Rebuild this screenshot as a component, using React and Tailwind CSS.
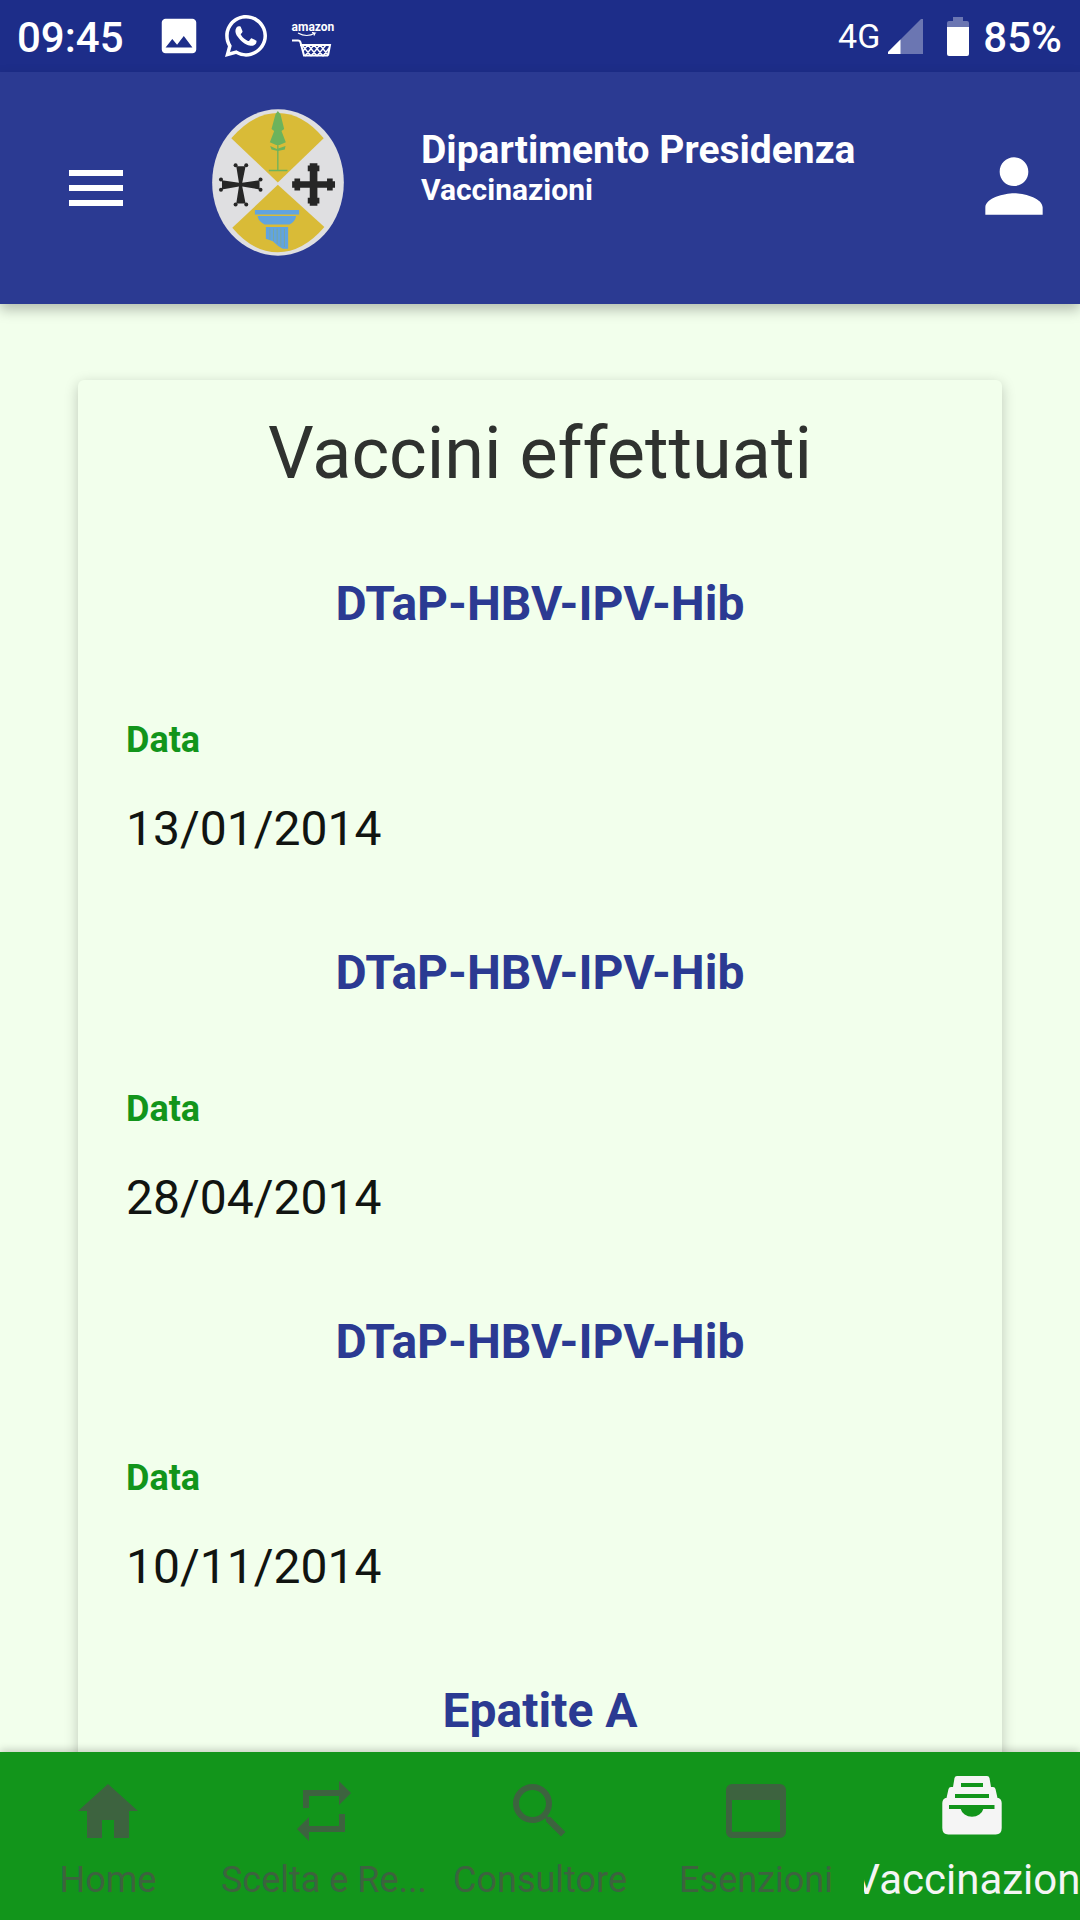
import React, { useState } from "react";
import { MdImage, MdMenu, MdPerson, MdRepeat, MdSearch } from "react-icons/md";
import { FaWhatsapp } from "react-icons/fa";

const vaccines = [
  { id: 1, name: "DTaP-HBV-IPV-Hib", date: "13/01/2014" },
  { id: 2, name: "DTaP-HBV-IPV-Hib", date: "28/04/2014" },
  { id: 3, name: "DTaP-HBV-IPV-Hib", date: "10/11/2014" },
  { id: 4, name: "Epatite A" },
];

const HomeIcon = () => (
  <svg viewBox="0 0 24 24" className="size-[72px]" fill="currentColor" aria-hidden="true">
    <path d="M10 21v-6h4v6h5v-9h3L12 3 2 12h3v9z" />
  </svg>
);

const WindowIcon = () => (
  <svg viewBox="0 0 24 24" className="size-[72px]" fill="currentColor" aria-hidden="true">
    <path
      fillRule="evenodd"
      d="M4 3h16a2 2 0 0 1 2 2v14a2 2 0 0 1-2 2H4a2 2 0 0 1-2-2V5a2 2 0 0 1 2-2zm0 5.3v10.6h16V8.3z"
    />
  </svg>
);

const DrawerIcon = () => (
  <svg viewBox="0 0 72 72" className="size-[72px]" fill="currentColor" aria-hidden="true">
    <path
      fillRule="evenodd"
      d="M21 7h30q2 0 2.5 2l1.5 9h2q2 0 2.5 2l2 9h1q3 1 3.2 5v25q0 6.5-6 6.5H12.3q-6 0-6-6.5V34q.2-4 3.2-5h1l2-9q.5-2 2.5-2h2l1.5-9Q19 7 21 7zm4 7v4h22v-4zm-6 11v4h34v-4zm-6 11v4h11.7a11.5 9.5 0 0 0 22.6 0H58.5v-4z"
    />
  </svg>
);

// Regione Calabria coat of arms
const Crest = () => (
  <svg viewBox="67 57 397 440" className="h-[147px] w-[132px] shrink-0" role="img" aria-label="Regione Calabria">
    <ellipse cx="265.5" cy="277" rx="198" ry="220" fill="#dfdfe1" />
    <path d="M265 277 125 144Q190 68 265 68T403 144z" fill="#d9bb37" />
    <path d="M265 284 128 413Q190 487 265 487T405 411z" fill="#d9bb37" />
    {/* pine */}
    <g fill="#6cb35c">
      <path d="M265 62 273 72 284 116 276 122 289 156 270 164H260L241 156 254 122 246 116 258 72z" />
      <path d="M242 167 262 176 288 167 286 178 265 182 246 178z" />
      <path d="M263 160h4v79h-4zM238 239h56v4h-56z" />
    </g>
    {/* column capital */}
    <g fill="#61a4e0">
      <path d="M196 360h133v13H196zM204 378h116q-3 18-20 25h-75q-18-8-21-25zM229 411h67v65h-16l-14-8-16-14-21-8z" />
    </g>
    <path d="M241 416v33M252 416v37M263 416v46M274 416v54M285 416v55" stroke="#83a982" strokeWidth="2" />
    {/* left cross */}
    <g fill="#262626">
      <path d="M148 278 140 228H168L158 278 210 270V298L158 289 168 340H140L148 289 97 298V270z" />
      <circle cx="138" cy="225" r="6" />
      <circle cx="170" cy="225" r="6" />
      <circle cx="138" cy="343" r="6" />
      <circle cx="170" cy="343" r="6" />
      <circle cx="94" cy="268" r="6" />
      <circle cx="94" cy="299" r="6" />
      <circle cx="213" cy="268" r="6" />
      <circle cx="213" cy="299" r="6" />
    </g>
    {/* right cross */}
    <path
      fill="#262626"
      d="M361 219h23v7h6v17h-6v30h29v-8h17v8h7v20h-7v8h-17v-8h-29v30h6v17h-6v7h-23v-7h-6v-17h6v-30h-29v8h-17v-8h-7v-20h7v-8h17v8h29v-30h-6v-17h6z"
    />
  </svg>
);

const CartIcon = () => (
  <svg viewBox="0 0 40 26" className="h-[26px] w-10" fill="none" stroke="white" aria-hidden="true">
    <path d="M6 1q9 5 17 0l-3-.5m3 .5-1 2.500" strokeWidth="1.2" />
    <path d="M0 8.500h6q2 0 2.5 2l3.500 13h24M8 13h30l-2 10.500" strokeWidth="2" />
    <path
      d="m10 13 9 11m-3-11 9 11m-3-11 9 11m-3-11 8 10M16 13l-5 6m11-6-9 11m15-11-9 11m15-11-9 11m12-8-6 8"
      strokeWidth="1.3"
    />
  </svg>
);

const StatusBar = () => (
  <div className="flex h-[72px] shrink-0 items-center justify-between bg-[#1d2d89] pr-[18px] pl-[17px] text-white">
    <div className="flex items-center">
      <span className="pt-1 text-[42px] leading-[56px] font-medium">09:45</span>
      <MdImage className="ml-8 size-[46px]" />
      <FaWhatsapp className="ml-5 size-12" />
      <div className="ml-[22px] flex flex-col pt-2">
        <span className="text-[12px] leading-[10px] font-bold">amazon</span>
        <CartIcon />
      </div>
    </div>
    <div className="flex items-center">
      <span className="text-[34px] leading-[56px]">4G</span>
      <svg viewBox="0 0 35 35" className="ml-2 size-[35px]" fill="white" aria-hidden="true">
        <path d="M0 35V33L33 0h2v35z" opacity=".35" />
        <path d="M0 35V33L12.5 20.5V35z" />
      </svg>
      <svg viewBox="0 0 22 39" className="ml-6 h-[39px] w-[22px]" fill="white" aria-hidden="true">
        <path d="M6 0h10v4h4q2 0 2 2v4H0V6q0-2 2-2h4z" opacity=".35" />
        <path d="M0 10h22v27q0 2-2 2H2q-2 0-2-2z" />
      </svg>
      <span className="ml-[14px] pt-1 text-[42px] leading-[56px] font-medium">85%</span>
    </div>
  </div>
);

const Header = () => (
  <header className="relative z-10 flex h-[232px] shrink-0 items-center bg-[#2b3a92] pr-[23px] pl-[60px] text-white shadow-[0_6px_12px_rgba(0,0,0,0.25)]">
    <button type="button" aria-label="Menu" className="shrink-0">
      <MdMenu className="size-[72px]" />
    </button>
    <div className="mb-3 ml-20">
      <Crest />
    </div>
    <div className="mb-10 ml-[77px] flex-1 font-bold">
      <h1 className="text-[39px] leading-[44px]">Dipartimento Presidenza</h1>
      <p className="text-[30px] leading-[36px]">Vaccinazioni</p>
    </div>
    <button type="button" aria-label="Profilo" className="mb-1 shrink-0">
      <MdPerson className="size-[86px]" />
    </button>
  </header>
);

const tabs = [
  { id: "home", label: "Home", icon: <HomeIcon /> },
  { id: "scelta", label: "Scelta e Re...", icon: <MdRepeat className="size-[72px]" /> },
  { id: "consultore", label: "Consultore", icon: <MdSearch className="size-[72px]" /> },
  { id: "esenzioni", label: "Esenzioni", icon: <WindowIcon /> },
  { id: "vaccinazioni", label: "Vaccinazioni", icon: <DrawerIcon /> },
];

const BottomNav = () => {
  const [active, setActive] = useState("vaccinazioni");

  return (
    <nav className="relative z-10 grid h-[168px] shrink-0 grid-cols-5 bg-[#12951b] shadow-[0_-2px_8px_rgba(0,0,0,0.2)]">
      {tabs.map((tab) => (
        <button
          key={tab.id}
          type="button"
          onClick={() => setActive(tab.id)}
          className={
            active === tab.id
              ? "flex min-w-0 flex-col items-center justify-between overflow-hidden pt-[17px] pb-4 text-[#f5f5f5]"
              : "flex min-w-0 flex-col items-center justify-between overflow-hidden pt-[23px] pb-4 text-[#3d633f]"
          }
        >
          {tab.icon}
          {active === tab.id ? (
            <span className="text-[42px] leading-[48px] whitespace-nowrap">{tab.label}</span>
          ) : (
            <span className="text-[36px] leading-[48px] whitespace-nowrap">{tab.label}</span>
          )}
        </button>
      ))}
    </nav>
  );
};

const App = () => {
  return (
    <div className="flex h-screen flex-col bg-[#f2ffec] font-[Roboto,sans-serif]">
      <StatusBar />
      <Header />
      <main className="min-h-0 flex-1 overflow-y-auto px-[78px] pt-[76px] [scrollbar-width:none]">
        <section className="rounded-md bg-[#f2ffec] px-12 pt-[26px] pb-20 shadow-[0_4px_14px_rgba(0,0,0,0.22)]">
          <h2 className="mb-[70px] text-center text-[72px] leading-[96px] text-[#2f322f]">
            Vaccini effettuati
          </h2>
          <div className="flex flex-col gap-20">
            {vaccines.map((vaccine) => (
              <article key={vaccine.id}>
                <h3 className="text-center text-[48px] leading-[64px] font-bold text-[#2b3a92]">
                  {vaccine.name}
                </h3>
                {vaccine.date && (
                  <dl className="mt-20">
                    <dt className="text-[36px] leading-[48px] font-bold text-[#12951b]">Data</dt>
                    <dd className="mt-[33px] text-[48px] leading-[64px] text-[#111411]">{vaccine.date}</dd>
                  </dl>
                )}
              </article>
            ))}
          </div>
        </section>
      </main>
      <BottomNav />
    </div>
  );
};

export default App;
